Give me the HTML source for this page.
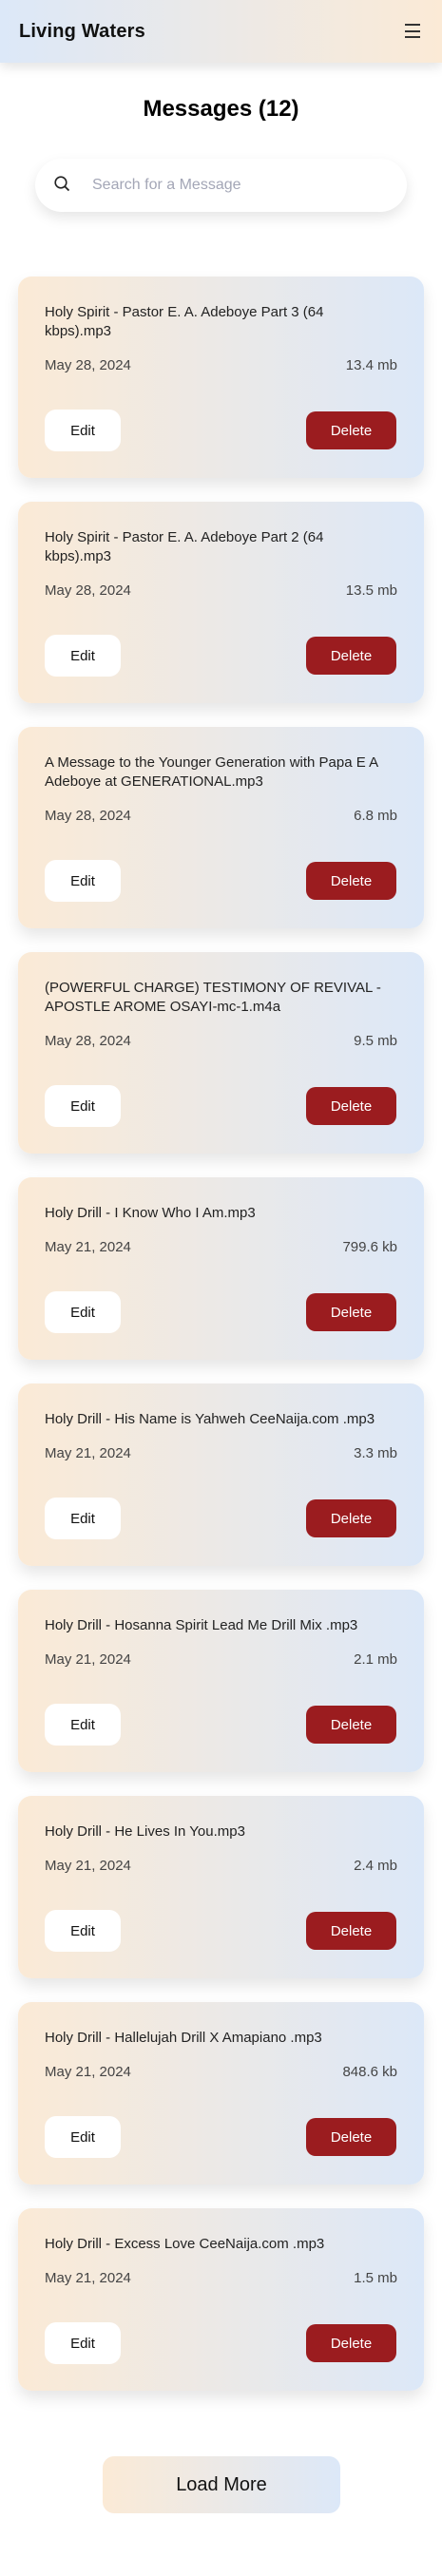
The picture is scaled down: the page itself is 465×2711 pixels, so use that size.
<!DOCTYPE html>
<html><head><meta charset="utf-8"><style>
*{box-sizing:border-box;margin:0;padding:0}
body{width:465px;height:2711px;background:#fff;font-family:"Liberation Sans",sans-serif;overflow:hidden;position:relative}
.hdr{position:absolute;left:0;top:0;width:465px;height:66px;background:linear-gradient(90deg,#dce8f8,#fbead6);box-shadow:0 4px 12px rgba(0,0,0,.12);z-index:2}
.hdr h1{position:absolute;left:20px;top:22px;font-size:20px;font-weight:bold;color:#111;letter-spacing:.2px}
.ham{position:absolute;left:426px;top:25px;width:16px}
.ham i{display:block;height:2px;background:#333;margin-bottom:4.5px}
.title{position:absolute;top:101px;width:465px;text-align:center;font-size:24px;font-weight:bold;color:#000}
.search{position:absolute;left:37px;top:167px;width:391px;height:56px;border-radius:28px;background:#fff;box-shadow:0 6px 14px rgba(0,0,0,.1)}
.search span{position:absolute;left:60px;top:19px;font-size:16px;color:#a3a6b6}
.search svg{position:absolute;left:20px;top:18px}
.cards{position:absolute;left:19px;top:291px;width:427px}
.card{border-radius:14px;background:linear-gradient(90deg,#fbead6,#dce8f8);padding:28px 28px;margin-bottom:25px;box-shadow:0 8px 16px rgba(0,0,0,.1)}
.t{font-size:15px;line-height:20px;color:#222;white-space:nowrap}
.d{display:flex;justify-content:space-between;margin-top:16px;font-size:15px;line-height:20px;color:#444}
.b{display:flex;justify-content:space-between;align-items:center;margin-top:36px;height:44px}
.e{width:80px;height:44px;background:#fff;border-radius:12px;display:flex;align-items:center;justify-content:center;font-size:15px;color:#111}
.x{width:95px;height:40px;background:#9b1c1f;border-radius:10px;display:flex;align-items:center;justify-content:center;font-size:15px;color:#fff;margin-right:1px}
.lm{position:absolute;left:108px;top:2585px;width:250px;height:60px;border-radius:12px;background:linear-gradient(90deg,#fbead6,#dce8f8);display:flex;align-items:center;justify-content:center;font-size:20px;color:#111}
</style></head><body>
<div class="hdr"><h1>Living Waters</h1><div class="ham"><i></i><i></i><i></i></div></div>
<div class="title">Messages (12)</div>
<div class="search"><svg width="17" height="17" viewBox="0 0 17 17"><circle cx="7" cy="7" r="5.8" fill="none" stroke="#222" stroke-width="1.6"/><line x1="11.2" y1="11.2" x2="15.5" y2="15.5" stroke="#222" stroke-width="1.8"/></svg><span>Search for a Message</span></div>
<div class="cards">
<div class="card"><div class="t">Holy Spirit - Pastor E. A. Adeboye Part 3 (64<br>kbps).mp3</div><div class="d"><span>May 28, 2024</span><span>13.4 mb</span></div><div class="b"><div class="e">Edit</div><div class="x">Delete</div></div></div>
<div class="card"><div class="t">Holy Spirit - Pastor E. A. Adeboye Part 2 (64<br>kbps).mp3</div><div class="d"><span>May 28, 2024</span><span>13.5 mb</span></div><div class="b"><div class="e">Edit</div><div class="x">Delete</div></div></div>
<div class="card"><div class="t">A Message to the Younger Generation with Papa E A<br>Adeboye at GENERATIONAL.mp3</div><div class="d"><span>May 28, 2024</span><span>6.8 mb</span></div><div class="b"><div class="e">Edit</div><div class="x">Delete</div></div></div>
<div class="card"><div class="t">(POWERFUL CHARGE) TESTIMONY OF REVIVAL -<br>APOSTLE AROME OSAYI-mc-1.m4a</div><div class="d"><span>May 28, 2024</span><span>9.5 mb</span></div><div class="b"><div class="e">Edit</div><div class="x">Delete</div></div></div>
<div class="card"><div class="t">Holy Drill - I Know Who I Am.mp3</div><div class="d"><span>May 21, 2024</span><span>799.6 kb</span></div><div class="b"><div class="e">Edit</div><div class="x">Delete</div></div></div>
<div class="card"><div class="t">Holy Drill - His Name is Yahweh CeeNaija.com .mp3</div><div class="d"><span>May 21, 2024</span><span>3.3 mb</span></div><div class="b"><div class="e">Edit</div><div class="x">Delete</div></div></div>
<div class="card"><div class="t">Holy Drill - Hosanna Spirit Lead Me Drill Mix .mp3</div><div class="d"><span>May 21, 2024</span><span>2.1 mb</span></div><div class="b"><div class="e">Edit</div><div class="x">Delete</div></div></div>
<div class="card"><div class="t">Holy Drill - He Lives In You.mp3</div><div class="d"><span>May 21, 2024</span><span>2.4 mb</span></div><div class="b"><div class="e">Edit</div><div class="x">Delete</div></div></div>
<div class="card"><div class="t">Holy Drill - Hallelujah Drill X Amapiano .mp3</div><div class="d"><span>May 21, 2024</span><span>848.6 kb</span></div><div class="b"><div class="e">Edit</div><div class="x">Delete</div></div></div>
<div class="card"><div class="t">Holy Drill - Excess Love CeeNaija.com .mp3</div><div class="d"><span>May 21, 2024</span><span>1.5 mb</span></div><div class="b"><div class="e">Edit</div><div class="x">Delete</div></div></div>
</div>
<div class="lm">Load More</div>
</body></html>
